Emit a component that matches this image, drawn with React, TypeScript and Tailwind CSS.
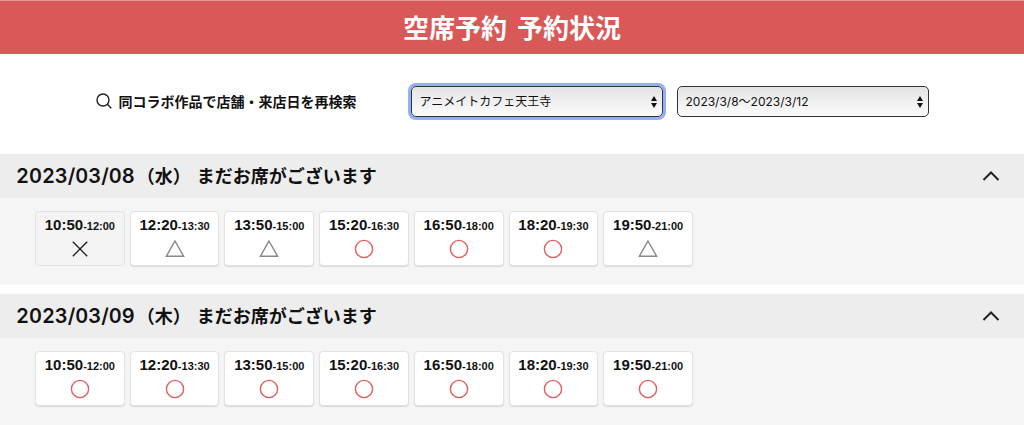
import { useState } from 'react'

type Status = 'full' | 'few' | 'open'

interface Slot {
  start: string
  end: string
  status: Status
}

interface Day {
  date: string
  weekday: string
  message: string
  slots: Slot[]
}

const days: Day[] = [
  {
    date: '2023/03/08',
    weekday: '（水）',
    message: 'まだお席がございます',
    slots: [
      { start: '10:50', end: '12:00', status: 'full' },
      { start: '12:20', end: '13:30', status: 'few' },
      { start: '13:50', end: '15:00', status: 'few' },
      { start: '15:20', end: '16:30', status: 'open' },
      { start: '16:50', end: '18:00', status: 'open' },
      { start: '18:20', end: '19:30', status: 'open' },
      { start: '19:50', end: '21:00', status: 'few' },
    ],
  },
  {
    date: '2023/03/09',
    weekday: '（木）',
    message: 'まだお席がございます',
    slots: [
      { start: '10:50', end: '12:00', status: 'open' },
      { start: '12:20', end: '13:30', status: 'open' },
      { start: '13:50', end: '15:00', status: 'open' },
      { start: '15:20', end: '16:30', status: 'open' },
      { start: '16:50', end: '18:00', status: 'open' },
      { start: '18:20', end: '19:30', status: 'open' },
      { start: '19:50', end: '21:00', status: 'open' },
    ],
  },
]

const StatusMark = ({ status }: { status: Status }) => (
  <svg
    className="h-5 w-5"
    viewBox="0 0 20 20"
    fill="none"
    strokeWidth="1.4"
    aria-hidden="true"
  >
    {status === 'full' && (
      <path d="M2.8 2.8 17.2 17.2M17.2 2.8 2.8 17.2" stroke="#222" />
    )}
    {status === 'few' && <path d="M10 2 18.6 17.2H1.4Z" stroke="#888" />}
    {status === 'open' && <circle cx="10" cy="10" r="8.6" stroke="#e06060" />}
  </svg>
)

const SlotButton = ({ slot }: { slot: Slot }) => {
  const full = slot.status === 'full'
  return (
    <button
      type="button"
      disabled={full}
      className={`flex h-[55px] flex-col items-center justify-start rounded border border-[#e2e2e2] pt-1 text-[#111] ${
        full ? 'bg-[#f4f4f4]' : 'bg-white shadow-[0_1px_1px_#d8d8d8]'
      }`}
    >
      <span className="flex items-baseline font-['Liberation_Sans',sans-serif] leading-[18px] font-bold">
        <span className="text-[15px]">{slot.start}</span>
        <span className="text-[11px]">-{slot.end}</span>
      </span>
      <span className="mt-1">
        <StatusMark status={slot.status} />
      </span>
    </button>
  )
}

const DaySection = ({ day }: { day: Day }) => {
  const [open, setOpen] = useState(true)
  return (
    <section>
      <h2>
        <button
          type="button"
          aria-expanded={open}
          onClick={() => setOpen(!open)}
          className="flex h-11 w-full items-center justify-between bg-[#ededed] pr-6 pb-0.5 pl-4 text-lg font-bold text-[#111]"
        >
          <span className="flex items-baseline">
            <span className="font-['Inter',sans-serif] text-xl font-semibold tabular-nums">
              {day.date}
            </span>
            <span className="ml-0.5">{day.weekday}</span>
            <span className="ml-1.5">{day.message}</span>
          </span>
          <svg
            className={`h-[18px] w-[18px] ${open ? '' : 'rotate-180'}`}
            viewBox="0 0 18 18"
            fill="none"
            stroke="#222"
            strokeWidth="2"
            aria-hidden="true"
          >
            <path d="M1.5 14 9 6.5 16.5 14" />
          </svg>
        </button>
      </h2>
      {open && (
        <div className="bg-[#f5f5f5] px-[35px] pt-[13px] pb-[19px]">
          <div className="grid max-w-[658px] grid-cols-7 gap-[5px]">
            {day.slots.map((slot) => (
              <SlotButton key={slot.start} slot={slot} />
            ))}
          </div>
        </div>
      )}
    </section>
  )
}

interface SelectBoxProps {
  label: string
  options: string[]
  autoFocus?: boolean
}

const SelectBox = ({ label, options, autoFocus }: SelectBoxProps) => (
  <div className="relative w-[252px]">
    <select
      aria-label={label}
      autoFocus={autoFocus}
      className="h-[31px] w-full appearance-none rounded-[5px] border border-[#333] bg-linear-to-b from-[#e4e4e4] to-[#fbfbfb] pr-6 pl-2 font-['Inter','Noto_Sans_CJK_JP',sans-serif] text-xs text-[#111] outline-none focus:ring-3 focus:ring-[#92b1f5]"
    >
      {options.map((option) => (
        <option key={option}>{option}</option>
      ))}
    </select>
    <svg
      className="pointer-events-none absolute top-[10px] right-[6px] h-3 w-[6px]"
      viewBox="0 0 6 12"
      fill="#111"
      aria-hidden="true"
    >
      <path d="M3 0 6 5H0ZM3 12 0 7H6Z" />
    </svg>
  </div>
)

const App = () => {
  return (
    <main className="bg-white font-['Noto_Sans_CJK_JP',sans-serif]">
      <header className="flex h-[54px] items-center justify-center border-t border-[#e19a9a] bg-[#d95858] pb-0.5">
        <h1 className="flex gap-2.5 text-[26px] font-bold text-white">
          <span>空席予約</span>
          <span>予約状況</span>
        </h1>
      </header>

      <div className="flex flex-wrap items-center justify-center gap-x-[54px] gap-y-4 pt-8 pb-[37px]">
        <p className="flex items-center gap-[7px] pb-0.5 text-sm font-bold text-[#111]">
          <svg
            className="h-4 w-4"
            viewBox="0 0 16 16"
            fill="none"
            stroke="#222"
            strokeWidth="1.4"
            aria-hidden="true"
          >
            <circle cx="7" cy="7" r="6" />
            <path d="m11.3 11.3 4 4" />
          </svg>
          同コラボ作品で店舗・来店日を再検索
        </p>
        <div className="flex flex-wrap gap-[14px]">
          <SelectBox label="店舗" options={['アニメイトカフェ天王寺']} autoFocus />
          <SelectBox label="来店日" options={['2023/3/8〜2023/3/12']} />
        </div>
      </div>

      <div className="flex flex-col gap-[9px]">
        {days.map((day) => (
          <DaySection key={day.date} day={day} />
        ))}
      </div>
    </main>
  )
}

export default App
